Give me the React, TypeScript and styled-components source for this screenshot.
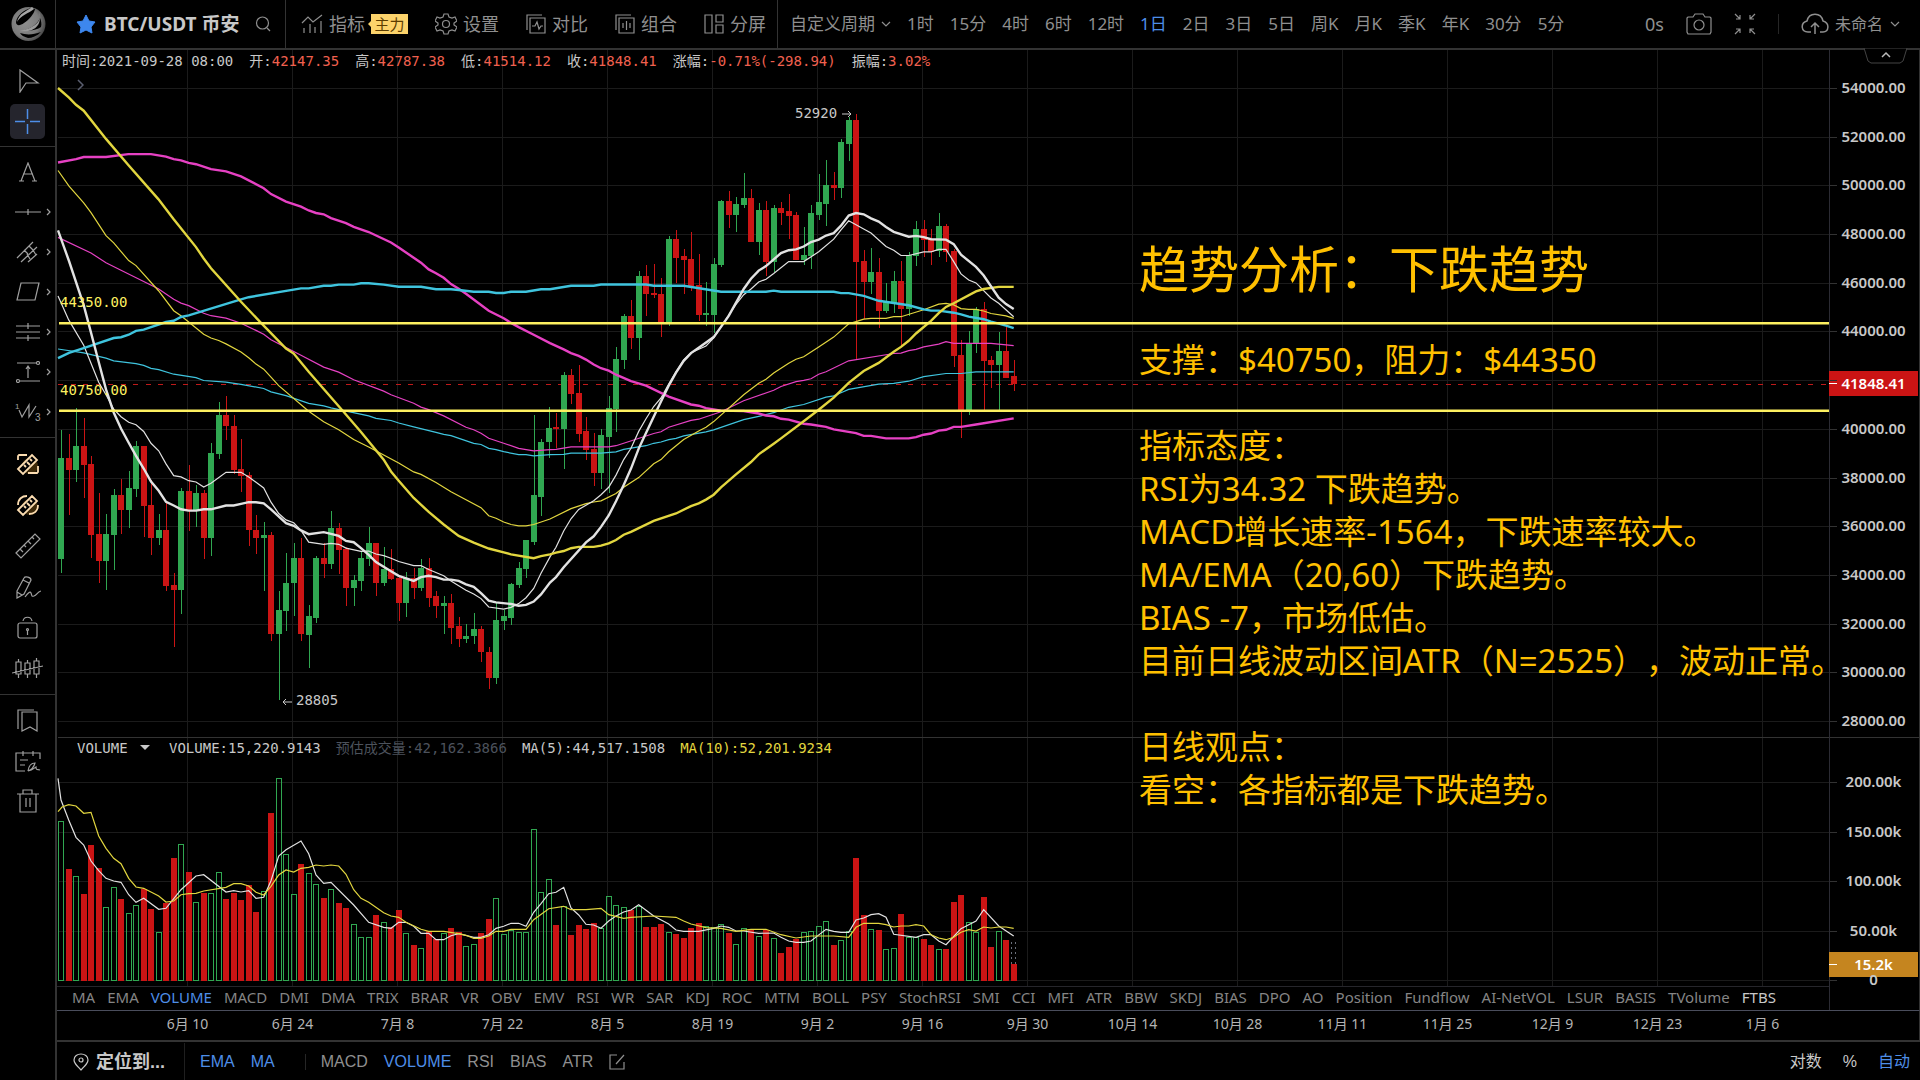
import React from "react";
import styled, { createGlobalStyle, css } from "styled-components";

const sans = `"Noto Sans", "Noto Sans CJK SC", sans-serif`;
const mono = `"DejaVu Sans Mono", "Noto Sans CJK SC", monospace`;

const c = {
  line: "#333333",
  grid: "#1b1b1b",
  text: "#8f8f8f",
  bright: "#c8c8c8",
  blue: "#4e8ee8",
  up: "#30a751",
  down: "#cb1414",
  yellow: "#e2d63f",
  level: "#fdf060",
  magenta: "#e641c3",
  cyan: "#3fc4de",
  white: "#e2e2e2",
};

const GlobalStyle = createGlobalStyle`
  * { box-sizing: border-box; }
  body { margin: 0; background: #000; color: ${c.text}; font-family: ${sans}; }
  button, select, input { font: inherit; color: inherit; background: none; border: 0; padding: 0; margin: 0; cursor: pointer; white-space: nowrap; }
  select { appearance: none; }
  option { background: #111; }
  svg { display: block; flex: none; }
`;

/* ---------- market data ---------- */

type Segment = { x0: number; y0: number; kx: number; ky: number };
type Point = [number, number];

const PRICE_A: Segment = { x0: 50, y0: 80, kx: 3, ky: 1568 / 660 };
const PRICE_B: Segment = { x0: 540, y0: 80, kx: 3, ky: 2.45 };
const VOL_A: Segment = { x0: 50, y0: 725, kx: 3, ky: 3 };
const VOL_B: Segment = { x0: 540, y0: 725, kx: 3, ky: 3 };

const SPLIT = 65;
const STEP = 7.5;
const FIRST_X = 61;

// direction, body top, body bottom, high, low
const CANDLES_A = `G898,1137,832,1172 R898,926,840,1034 G870,926,779,954 R870,914,803,993 R912,1080,893,1135 R1079,1143,981,1195 G1079,1143,1031,1211 G986,1080,972,1165 R986,1021,949,1078 G969,1021,930,1064 G870,971,858,991 R870,1011,870,1085 R1010,1089,950,1128 G1069,1089,1031,1105 R1069,1203,1005,1215 R1200,1211,1171,1347 G977,1211,970,1268 R977,1021,915,1071 G981,1021,962,1061 R981,1087,975,1139 G886,1087,863,1131 G796,888,766,900 R796,822,751,855 R821,926,797,936 R924,941,853,979 R938,1070,932,1108 R1069,1089,1033,1127 G1081,1089,1051,1213 R1081,1315,1075,1333 G1259,1315,1215,1474 G1195,1262,1124,1308 G1136,1196,1101,1273 R1136,1315,1089,1332 G1274,1319,1248,1397 G1136,1277,1132,1291 R1136,1149,1101,1182 G1064,1149,1024,1161 R1064,1117,1053,1173 R1115,1206,1110,1249 G1188,1206,1176,1250 G1136,1191,1120,1213 G1100,1137,1061,1155 R1100,1194,1100,1225 G1162,1194,1109,1201 R1162,1185,1114,1187 R1184,1242,1178,1285 G1184,1242,1169,1275 R1184,1206,1160,1232 G1159,1206,1137,1214 R1159,1230,1136,1251 R1227,1250,1214,1277 G1243,1250,1226,1315 R1243,1301,1221,1340 R1298,1327,1276,1346 G1320,1327,1292,1338 G1304,1322,1266,1341 R1304,1360,1296,1383 R1358,1420,1346,1448 G1284,1420,1242,1436 G1274,1286,1258,1306 G1197,1277,1195,1294 G1159,1200,1146,1208 G1093,1161,1093,1183 G986,1097,796,1105 G859,990,854,1036`;
const CANDLES_B = `G853,888,800,926 R849,855,816,902 G723,855,715,954 R723,769,708,794 R767,867,698,887 R861,906,825,931 R905,963,866,995 G870,963,856,1002 G804,874,773,1012 G684,806,653,862 G578,686,574,708 R578,631,538,659 G480,631,469,687 R480,524,454,579 R521,527,452,533 R524,597,484,629 G390,597,383,602 R390,435,367,497 R431,441,414,524 R439,505,373,516 R502,575,426,591 G570,576,496,602 G451,576,435,620 G296,453,294,458 R296,331,272,363 G304,331,287,372 G288,306,227,314 R288,398,266,398 G318,398,301,429 R318,447,296,479 G313,447,307,471 R313,325,299,355 R321,333,279,390 R331,441,324,441 G429,441,361,453 G327,431,307,464 G300,331,230,342 G257,304,197,357 R257,264,225,294 G153,264,144,289 G97,157,90,198 R97,446,83,685 R444,496,416,586 G471,496,412,524 R471,566,435,607 G543,567,497,571 G493,546,469,571 R493,560,444,651 G429,560,422,577 G366,431,346,455 R366,393,344,434 R390,421,366,453 G358,418,326,434 R358,422,354,445 R420,675,414,703 R674,808,637,877 G646,808,615,820 G562,646,557,670 R562,688,543,808 R686,698,677,755 G664,698,618,808 R664,729,606,729 R726,746,687,762`;

const VOLUMES = [
  287, 432, 452, 507, 360, 430, 547, 487, 522, 565, 539, 491, 552, 622, 535, 399, 358, 440, 532, 503, 505, 441, 522, 503, 525, 480, 560, 497, 264, 160, 388, 508,
  417, 445, 478, 519, 493, 534, 549, 598, 637, 637, 570, 592, 607, 555, 625, 660, 670, 619, 642, 625, 609, 622, 663, 658, 624, 582, 520, 628, 614, 622, 622, 313,
  502, 463, 601, 544, 631, 601, 612, 594, 610, 512, 539, 547, 556, 543, 606, 606, 597, 622, 627, 639, 609, 594, 602, 605, 596, 624, 656, 610, 613, 632, 615, 640,
  684, 666, 642, 622, 618, 602, 587, 660, 644, 618, 399, 570, 613, 616, 673, 670, 567, 635, 637, 642, 660, 673, 672, 531, 511, 592, 622, 516, 666, 618, 646, 717,
];

const LINES = [
  {
    color: c.cyan, width: 1.2,
    a: "24,639;101,648;168,661;191,667;258,674;281,678;303,685;326,688;371,699;438,707;461,714;528,718;573,723;641,733;663,741;708,750;776,768;821,774;843,779;956,798;978,804;1023,809;1046,815;1091,824;1158,837;1181,842;1203,845;1271,863;1293,866;1316,875;1338,878;1361,883;1406,890;1428,890;1451,893;1500,890",
    b: "71,917;93,914;183,914;228,911;251,905;273,902;318,896;341,890;363,887;386,881;408,878;431,872;498,862;521,857;611,832;656,824;701,815;746,802;791,795;858,777;881,774;903,766;926,758;1016,745;1061,743;1106,738;1151,727;1218,719;1263,719;1308,715;1421,715",
  },
  {
    color: c.magenta, width: 1.2,
    a: "24,374;123,411;168,434;213,452;325,496;371,521;393,530;416,536;461,554;483,560;528,566;573,578;618,595;641,604;663,617;753,654;821,682;866,694;911,712;1001,739;1023,748;1091,768;1113,777;1136,783;1181,798;1248,825;1271,831;1293,839;1316,851;1361,863;1406,875;1451,881;1500,878",
    b: "48,905;93,899;206,899;228,896;341,866;363,862;386,851;453,834;476,831;543,813;611,786;701,760;723,751;768,739;791,736;813,732;836,721;858,715;926,688;1061,670;1083,669;1106,663;1128,660;1151,654;1196,647;1218,641;1241,645;1353,645;1421,651",
  },
  {
    color: c.yellow, width: 1.2,
    a: "24,215;57,252;101,292;123,315;168,370;191,387;236,429;258,441;325,500;371,548;393,560;461,604;483,613;506,619;528,627;573,646;596,660;618,675;641,687;663,706;686,726;776,787;821,812;866,831;911,854;956,872;1046,910;1091,931;1113,937;1158,956;1203,978;1293,1016;1316,1035;1338,1041;1361,1050;1383,1056;1406,1059;1428,1059;1451,1056;1500,1043",
    b: "93,1050;138,1038;161,1034;183,1031;228,1013;251,998;296,974;341,940;363,930;386,911;431,881;476,860;498,851;521,837;611,771;656,743;678,733;701,718;746,694;768,684;791,678;836,654;881,630;926,597;948,592;971,586;993,584;1038,584;1061,580;1083,580;1151,563;1196,549;1218,547;1241,551;1263,560;1286,562;1308,562;1331,566;1353,572;1398,578;1421,584",
  },
  {
    color: c.white, width: 1.2,
    a: "24,513;56,570;101,630;123,673;146,718;168,748;191,782;213,800;236,813;258,819;281,835;303,863;326,881;348,912;371,940;393,943;416,952;438,955;461,967;483,958;528,932;573,932;596,943;641,969;663,1003;686,1030;708,1045;731,1052;753,1070;776,1098;821,1103;843,1101;866,1103;888,1112;933,1120;956,1119;978,1126;1001,1130;1023,1136;1046,1144;1091,1154;1113,1154;1136,1163;1181,1178;1203,1190;1248,1212;1271,1221;1293,1232;1316,1252;1361,1257;1383,1253;1406,1244;1428,1230;1451,1208;1473,1172;1500,1133",
    b: "48,1145;71,1105;93,1075;116,1052;161,1031;183,1016;206,998;228,968;251,930;273,902;296,861;318,830;341,800;363,779;386,745;408,715;431,686;453,668;498,652;521,632;566,576;588,550;611,526;633,512;656,495;678,488;701,474;746,445;791,445;836,421;881,390;903,367;926,345;971,365;993,375;1038,408;1061,417;1083,430;1106,430;1151,421;1173,421;1196,415;1218,415;1241,445;1263,475;1286,490;1308,497;1353,534;1376,547;1421,580",
  },
  {
    color: c.magenta, width: 2.4,
    a: "24,196;78,188;101,183;168,183;235,176;303,176;348,182;371,188;393,191;416,197;438,200;483,212;528,217;573,229;641,257;663,271;708,289;753,301;776,310;798,316;821,319;843,328;888,340;911,349;956,361;1023,386;1046,398;1113,434;1136,450;1158,459;1181,470;1203,485;1226,496;1248,508;1316,548;1361,566;1383,577;1406,587;1451,605;1500,625",
    b: "71,660;93,669;116,676;138,685;161,697;183,706;206,712;228,722;273,738;318,749;386,776;453,795;476,798;498,804;543,810;611,811;656,817;678,822;701,824;723,830;746,832;791,842;813,844;858,850;881,856;948,865;971,872;993,872;1038,878;1106,878;1128,875;1151,869;1173,866;1196,859;1218,857;1241,850;1263,850;1308,844;1421,829",
  },
  {
    color: c.cyan, width: 2.4,
    a: "24,661;57,648;101,637;191,613;213,611;236,605;258,596;281,593;348,575;371,572;393,563;416,559;573,521;596,516;753,495;776,495;821,489;843,489;866,486;911,486;933,483;956,483;1001,486;1046,491;1113,491;1158,497;1203,497;1226,499;1271,503;1316,503;1338,506;1361,506;1383,503;1428,503;1473,497;1500,497",
    b: "93,504;161,504;183,501;318,501;341,504;431,504;543,519;678,519;701,516;723,519;881,519;903,522;926,522;971,529;1016,541;1106,552;1151,562;1173,565;1196,565;1241,570;1263,574;1286,580;1331,586;1353,592;1376,597;1398,602;1421,608",
  },
  {
    color: c.yellow, width: 2.4,
    a: "24,19;57,42;78,59;101,73;168,140;235,202;325,283;371,331;438,397;461,424;483,447;573,527;633,577;708,638;731,650;776,693;821,734;878,786;933,836;1001,902;1023,930;1046,952;1091,993;1136,1026;1181,1056;1226,1083;1271,1099;1316,1113;1361,1122;1383,1127;1451,1136;1473,1131;1500,1127",
    b: "48,1158;71,1154;93,1147;116,1144;161,1144;183,1141;206,1135;228,1127;251,1114;273,1107;341,1080;408,1062;453,1044;476,1037;498,1028;521,1016;543,998;588,966;633,936;656,917;701,891;723,878;791,836;836,808;881,778;926,742;971,713;1016,693;1061,666;1083,654;1106,639;1128,621;1173,590;1196,571;1218,556;1241,547;1308,518;1331,512;1376,507;1421,507",
  },
  {
    color: c.white, width: 2.4,
    a: "24,357;57,430;101,535;123,600;146,670;168,735;191,790;213,828;236,862;258,893;281,923;303,954;326,976;348,1002;371,1011;393,1020;416,1023;438,1023;461,1020;483,1020;528,1011;551,1011;573,1007;596,1003;618,1003;641,1006;663,1020;708,1053;731,1059;753,1070;776,1079;821,1074;843,1078;866,1083;888,1095;911,1098;933,1112;956,1128;978,1145;1023,1167;1046,1178;1091,1190;1113,1181;1136,1178;1158,1181;1181,1187;1203,1187;1226,1190;1248,1198;1271,1204;1293,1219;1316,1237;1338,1241;1383,1245;1406,1249;1428,1247;1451,1239;1473,1222;1500,1194",
    b: "48,1218;71,1194;138,1133;161,1118;183,1095;206,1067;228,1032;251,992;273,952;296,903;318,865;341,825;363,788;386,749;408,717;431,688;453,669;476,656;521,630;543,605;566,578;611,512;633,487;656,467;678,456;723,424;746,417;768,415;791,408;813,397;836,391;858,381;881,375;903,357;926,332;948,326;971,329;993,339;1016,347;1038,360;1061,372;1106,384;1128,382;1151,385;1173,390;1218,391;1241,402;1263,428;1308,458;1331,479;1376,533;1398,549;1421,561",
  },
];

const VOLUME_LINES = [
  {
    color: c.white, width: 1.2,
    a: "24,160;33,225;56,285;78,337;101,360;123,408;146,437;168,460;191,468;213,472;236,509;258,532;281,520;326,553;348,550;393,494;438,453;461,449;528,501;551,497;573,501;596,497;618,520;641,517;663,467;686,393;708,374;753,348;776,386;798,450;821,475;843,472;911,540;956,592;1001,607;1023,610;1046,592;1068,592;1091,604;1113,625;1136,625;1158,644;1181,644;1203,632;1226,626;1271,637;1293,637;1316,629;1338,610;1361,604;1383,595;1406,595;1428,604;1451,562;1473,536;1496,506",
    b: "48,502;71,487;93,549;116,570;138,598;161,600;183,610;206,588;228,573;251,561;273,555;296,539;341,573;386,597;408,615;431,619;476,619;521,610;543,603;566,607;588,618;611,618;656,625;701,624;723,637;746,648;768,652;791,652;813,648;858,613;881,619;903,622;926,622;948,585;971,579;993,569;1016,566;1038,577;1061,628;1128,637;1151,629;1173,629;1196,648;1218,659;1263,611;1308,588;1331,554;1376,603;1421,633",
  },
  {
    color: c.yellow, width: 1.2,
    a: "24,260;36,246;56,239;78,243;101,265;123,262;146,333;168,370;191,400;213,416;236,460;258,486;281,490;326,513;348,531;371,528;393,509;416,506;438,505;461,498;528,487;551,476;573,476;596,483;618,502;641,510;663,484;686,450;708,435;731,441;753,430;776,427;798,420;821,423;843,420;866,423;888,448;911,494;933,520;956,532;1001,563;1023,573;1046,577;1068,592;1113,613;1136,619;1181,619;1226,626;1248,631;1271,640;1293,640;1316,633;1338,619;1361,619;1383,613;1428,613;1451,584;1496,551",
    b: "71,544;93,554;138,554;183,550;206,569;251,580;273,577;341,573;408,577;431,588;453,597;498,608;543,610;588,619;633,613;678,613;723,629;768,639;813,633;881,633;926,637;948,607;971,595;1016,595;1038,599;1061,606;1083,603;1106,603;1128,599;1151,603;1173,629;1196,639;1218,644;1241,637;1263,622;1286,614;1308,618;1331,606;1353,609;1376,606;1398,606;1421,610",
  },
];

const parse = (s: string): Point[] => s.split(";").map((p) => p.split(",").map(Number) as Point);
const project = (pts: Point[], s: Segment) => pts.map(([x, y]) => `${(s.x0 + x / s.kx).toFixed(1)},${(s.y0 + y / s.ky).toFixed(1)}`);
const trace = (a: string, b: string, sa: Segment, sb: Segment) => [...project(parse(a), sa), ...project(parse(b), sb)].join(" ");

const candles = [
  ...CANDLES_A.split(" ").map((row) => ({ row, seg: PRICE_A })),
  ...CANDLES_B.split(" ").map((row) => ({ row, seg: PRICE_B })),
].map(({ row, seg }, i) => {
  const [top, bottom, high, low] = row.slice(1).split(",").map((v) => seg.y0 + Number(v) / seg.ky);
  const up = row[0] === "G";
  return { x: FIRST_X + i * STEP, up, top, bottom, high, low, vol: (i < SPLIT ? VOL_A : VOL_B).y0 + VOLUMES[i] / 3 };
});

const PRICE_LABELS = ["54000.00", "52000.00", "50000.00", "48000.00", "46000.00", "44000.00", "", "40000.00", "38000.00", "36000.00", "34000.00", "32000.00", "30000.00", "28000.00"];
const VOLUME_LABELS = ["200.00k", "150.00k", "100.00k", "50.00k", "0"];
const DATES = ["6月 10", "6月 24", "7月 8", "7月 22", "8月 5", "8月 19", "9月 2", "9月 16", "9月 30", "10月 14", "10月 28", "11月 11", "11月 25", "12月 9", "12月 23", "1月 6"];
const PERIODS = ["1时", "15分", "4时", "6时", "12时", "1日", "2日", "3日", "5日", "周K", "月K", "季K", "年K", "30分", "5分"];
const INDICATORS = ["MA", "EMA", "VOLUME", "MACD", "DMI", "DMA", "TRIX", "BRAR", "VR", "OBV", "EMV", "RSI", "WR", "SAR", "KDJ", "ROC", "MTM", "BOLL", "PSY", "StochRSI", "SMI", "CCI", "MFI", "ATR", "BBW", "SKDJ", "BIAS", "DPO", "AO", "Position", "Fundflow", "AI-NetVOL", "LSUR", "BASIS", "TVolume", "FTBS"];

/* ---------- layout ---------- */

const Page = styled.div`
  display: flex;
  flex-direction: column;
  min-height: 100vh;
  background: #000;
`;

const Header = styled.header`
  display: flex;
  height: 50px;
  border-bottom: 2px solid ${c.line};
  font-size: 18px;
  line-height: 24px;
`;

const LogoBox = styled.a`
  display: flex;
  align-items: center;
  width: 56px;
  padding-left: 11px;
  border-right: 1px solid ${c.line};
`;

const Symbol = styled.div`
  display: flex;
  align-items: center;
  gap: 8px;
  width: 230px;
  padding: 0 0 1px 20px;
  border-right: 1px solid ${c.line};
`;

const Pair = styled.h1`
  flex: 1;
  margin: 0;
  font-size: 19px;
  font-weight: 700;
  color: ${c.bright};
  white-space: nowrap;
`;

const SearchButton = styled.button`
  padding-right: 14px;
`;

const ToolGroup = styled.nav`
  display: flex;
  align-items: center;
  gap: 27px;
  padding: 0 11px 1px 15px;
  border-right: 1px solid ${c.line};
`;

const Tool = styled.button`
  display: flex;
  align-items: center;
  gap: 6px;
`;

const Tag = styled.span`
  position: relative;
  width: 37px;
  height: 20px;
  background: #fcd36b;
  color: #5c3d00;
  font-size: 15px;
  line-height: 20px;
  text-align: center;
  &::before {
    content: "";
    position: absolute;
    left: -3px;
    top: 7px;
    border: 3px solid transparent;
    border-left: 0;
    border-right-color: #fcd36b;
  }
`;

const Periods = styled.nav`
  display: flex;
  align-items: center;
  gap: 16px;
  padding: 0 0 1px 12px;
  font-size: 17px;
`;

const Picker = styled.label<{ $size?: number }>`
  display: flex;
  align-items: center;
  gap: 6px;
  ${(p) => p.$size && css`font-size: ${p.$size}px;`}
`;

const Period = styled.button<{ $active?: boolean }>`
  color: ${(p) => (p.$active ? c.blue : c.text)};
`;

const HeaderEnd = styled.div`
  display: flex;
  align-items: center;
  gap: 22px;
  margin-left: auto;
  padding: 0 20px 1px 0;
`;

const Rule = styled.span<{ $h?: number }>`
  width: 1px;
  height: ${(p) => p.$h ?? 20}px;
  background: #262626;
`;

const Body = styled.div`
  display: flex;
  flex: 1;
`;

const Sidebar = styled.aside`
  width: 57px;
  flex: none;
  border-right: 2px solid ${c.line};
`;

const SideGroup = styled.div<{ $top: number; $last?: boolean }>`
  padding: ${(p) => p.$top}px 0 5px;
  ${(p) => !p.$last && css`border-bottom: 1px solid ${c.line};`}
`;

const SideTool = styled.button<{ $tall?: boolean }>`
  position: relative;
  display: flex;
  align-items: center;
  justify-content: center;
  width: 55px;
  height: ${(p) => (p.$tall ? 41 : 40)}px;
  color: #a0a0a0;
`;

const SideIcon = styled.span<{ $active?: boolean }>`
  display: flex;
  align-items: center;
  justify-content: center;
  width: 35px;
  height: 35px;
  border-radius: 5px;
  ${(p) => p.$active && css`background: #25252d; color: ${c.blue};`}
`;

const Caret = styled.span`
  position: absolute;
  right: 4px;
`;

const Main = styled.main`
  display: flex;
  flex: 1;
  flex-direction: column;
  min-width: 0;
`;

const ChartRow = styled.section`
  position: relative;
  display: flex;
`;

const PlotColumn = styled.div`
  position: relative;
  flex: 1;
  min-width: 0;
`;

const Plot = styled.svg`
  width: 100%;
  height: 936px;
`;

const Legend = styled.div<{ $top: number; $left: number; $gap: number }>`
  position: absolute;
  top: ${(p) => p.$top}px;
  left: ${(p) => p.$left}px;
  display: flex;
  align-items: center;
  gap: ${(p) => p.$gap}px;
  color: ${c.bright};
  font-family: ${mono};
  font-size: 14px;
  line-height: 20px;
  white-space: nowrap;
`;

const Red = styled.span`
  color: #f0604f;
`;

const Tinted = styled.span<{ $color: string }>`
  color: ${(p) => p.$color};
`;

const Expander = styled.button`
  position: absolute;
  left: 19px;
  top: 28px;
  color: #5b5f70;
`;

const CollapseTab = styled.button`
  position: absolute;
  right: 12px;
  top: -2px;
  z-index: 2;
`;

const Tabs = styled.div`
  display: flex;
  gap: 12px;
  height: 24px;
  padding-left: 15px;
  overflow: hidden;
  border-top: 1px solid #26262b;
  font-size: 15px;
  line-height: 20px;
`;

const Tab = styled.button<{ $tone?: string }>`
  height: 20px;
  color: ${(p) => p.$tone ?? "#858585"};
`;

const Axis = styled.div`
  width: 91px;
  flex: none;
  border-left: 1px solid #2b2b33;
  border-right: 1px solid ${c.line};
  color: ${c.bright};
  font-size: 15px;
  font-weight: 600;
  line-height: 20px;
  text-align: center;
`;

const Scale = styled.div<{ $kind: "price" | "volume" }>`
  position: relative;
  display: flex;
  flex-direction: column;
  justify-content: space-between;
  height: ${(p) => (p.$kind === "price" ? 688 : 272)}px;
  padding: ${(p) => (p.$kind === "price" ? "27px 2px 7px 0" : "33px 2px 21px 0")};
  ${(p) => p.$kind === "price" && css`border-bottom: 1px solid ${c.line};`}
`;

const Mark = styled.span`
  position: relative;
  z-index: 1;
  height: 20px;
  &::before {
    content: "";
    position: absolute;
    left: 0;
    top: 11px;
    width: 7px;
    height: 1px;
    background: ${c.line};
  }
`;

const Flag = styled.span<{ $top: number; $color: string }>`
  position: absolute;
  left: -1px;
  right: 1px;
  top: ${(p) => p.$top}px;
  height: 25px;
  background: ${(p) => p.$color};
  color: #fff;
  line-height: 25px;
  &::before {
    content: "";
    position: absolute;
    left: 0;
    top: 12px;
    width: 8px;
    height: 1px;
    background: #fff;
  }
`;

const Notes = styled.div`
  position: absolute;
  left: 1082px;
  top: 189px;
  z-index: 3;
  color: #ffc000;
  font-size: 33px;
  line-height: 43px;
  text-spacing-trim: space-all;
  white-space: nowrap;
  p { margin: 0; min-height: 43px; }
`;

const NotesTitle = styled.h2`
  margin: 0 0 39px;
  font-size: 50px;
  font-weight: 400;
  line-height: 60px;
`;

const TimeAxis = styled.div`
  display: flex;
  height: 30px;
  padding-left: 78px;
  overflow: hidden;
  border-top: 1px solid #4a4d5c;
  border-right: 1px solid ${c.line};
  color: #b4b4b4;
  font-size: 14px;
  line-height: 26px;
`;

const DateCell = styled.span`
  width: 105px;
  flex: none;
  text-align: center;
`;

const Footer = styled.footer`
  display: flex;
  flex: 1;
  align-items: center;
  min-height: 40px;
  padding-top: 1px;
  border-top: 2px solid ${c.line};
  font-family: "Liberation Sans", "Noto Sans CJK SC", sans-serif;
  font-size: 16px;
  line-height: 24px;
`;

const Locate = styled.button`
  display: flex;
  align-items: center;
  gap: 7px;
  width: 128px;
  height: 37px;
  padding-left: 16px;
  border-right: 1px solid #1f1f1f;
  color: ${c.bright};
  font-size: 18px;
  font-weight: 700;
`;

const FooterGroup = styled.div<{ $end?: boolean }>`
  display: flex;
  align-items: center;
  gap: 16px;
  padding-left: 15px;
  ${(p) => p.$end && css`margin-left: auto; padding-right: 10px; gap: 21px; color: ${c.bright};`}
`;

const FooterRule = styled(Rule)`
  margin-left: 30px;
`;

const FooterButton = styled.button<{ $active?: boolean }>`
  ${(p) => p.$active && css`color: ${c.blue};`}
`;

/* ---------- icons ---------- */

const Icon = ({ w = 24, h = w, sw = 1.2, children }: { w?: number; h?: number; sw?: number; children: React.ReactNode }) => (
  <svg width={w} height={h} viewBox={`0 0 ${w} ${h}`} fill="none" stroke="currentColor" strokeWidth={sw} aria-hidden="true">
    {children}
  </svg>
);

const Chevron = () => (
  <Icon w={10} h={8}><path d="M1 2l4 4 4-4" /></Icon>
);

const Logo = () => (
  <svg width="35" height="36" viewBox="0 0 35 36" aria-hidden="true">
    <defs>
      <radialGradient id="ball" cx="0.4" cy="0.45" r="0.6">
        <stop offset="0" stopColor="#8f8f8f" />
        <stop offset="0.7" stopColor="#7b7b7b" />
        <stop offset="1" stopColor="#4a4a4a" />
      </radialGradient>
    </defs>
    <circle cx="17.500" cy="18" r="17" fill="url(#ball)" />
    <path d="M20 2C12 4 6 10 5 16c0 4 4 4 8 1C18 14 23 8 24 3z" fill="#000" />
    <path d="M21 1c-5 4-13 6-15 15 3-6 12-9 17-13z" fill="#a5a5a5" />
    <path d="M29 12c-2 5-8 10-15 12 5 1 12 0 16-3 1-3 0-7-1-9z" fill="#000" />
    <path d="M9 27c6 2 13 2 21-1-4 4-9 6-13 6-4-1-7-3-8-5z" fill="#000" />
    <path d="M28 5c4 9-3 17-20 20 16 2 24-6 20-20z" fill="#9a9a9a" />
  </svg>
);

const goldTool = (curved: boolean) => (
  <svg width="26" height="26" viewBox="0 0 26 26" fill="none" stroke="#fbdcb0" strokeWidth="1.8" aria-hidden="true">
    <circle cx="15" cy="15" r="8" fill="#3d2908" stroke="none" />
    <path d="M3 18L17 4l5 5L8 23zM9 14l2 2M12 11l3 3M15 8l2 2" fill="#000" />
    {curved ? <path d="M3 13c0-6 4-9 9-9M23 13c0 6-4 9-9 9" /> : <path d="M3 9V5l1-1h8M23 15v6l-1 1h-9" />}
  </svg>
);

const sideIcons = {
  cursor: <Icon w={24}><path d="M4 1v22l6-9 12 0z" /></Icon>,
  cross: <Icon w={25} sw={1.5}><path d="M12.500 0v10M12.500 15v10M0 12.500h10M15 12.500h10" /></Icon>,
  text: <Icon w={20}><path d="M3 19L10 1l7 18M5 12h10M1 19h5M14 19h5" /></Icon>,
  line: <Icon w={26} h={8}><path d="M0 4h26M13 1v6" /></Icon>,
  pitch: <Icon w={24}><path d="M1 18L17 2M5 22L21 7M12 22l9-8M8 10l4 4M13 6l4 4M17 10l3 5M11 14l3 5" /></Icon>,
  shape: <Icon w={24} h={20}><path d="M5 1h18l-4 17H1z" /></Icon>,
  fib: <Icon w={24} h={18}><path d="M0 3h24M0 9h24M0 15h24M12 0v6M12 12v6" /></Icon>,
  measure: <Icon w={24} h={22}><path d="M1 2h20M4 20h20M12 17V6M10 8l2-3 2 3" /><circle cx="22" cy="2" r="1.500" /><circle cx="2" cy="20" r="1.500" /></Icon>,
  wave: (
    <svg width="26" height="20" viewBox="0 0 26 20" fill="none" stroke="currentColor" strokeWidth="1.2" aria-hidden="true">
      <path d="M4 8l3 7L14 3l0 12 7-11" />
      <text x="0" y="7" fontSize="8" fill="currentColor" stroke="none" fontFamily="Liberation Sans">1</text>
      <text x="20" y="19" fontSize="10" fill="currentColor" stroke="none" fontFamily="Liberation Sans">3</text>
    </svg>
  ),
  ruler: <Icon w={26}><path d="M1 20L20 1l5 5L6 25zM5 16l3 3M9 12l2 2M13 8l3 3M17 4l2 2" /></Icon>,
  pencil: <Icon w={26} h={24}><path d="M2 16L9 3c1-2 7-1 7 2L9 19l-7 4zM8 5l6 3M2 17l5 3M10 22c3-4 5-6 6-4s0 4 3 3 3-4 7-5" /></Icon>,
  lock: <Icon w={22} h={24}><rect x="1" y="7" width="19" height="15" rx="2" /><path d="M6 5c1-5 8-5 9 0M10.500 14v5" /><circle cx="10.500" cy="13.500" r="1" /></Icon>,
  bars: <Icon w={32} h={22}><path d="M4 4h5v12H4zM13 5h5v11h-5zM22 3h5v13h-5zM6.500 1v3M6.500 16v4M15.500 2v3M15.500 16v4M24.500 0v3M24.500 16v4M0 15l31-7" /></Icon>,
  bookmark: <Icon w={22} h={24}><path d="M5 3h15v19l-7-4-8 4zM1 20V1h16" /></Icon>,
  note: <Icon w={26} h={22}><path d="M10 21H1V3h24v6M8 1v5M18 1v5M5 10h8M5 15h5M13 21c1-7 5-8 7-8-1 4-4 7-7 8 5-1 6-3 8-4 0 4 2 2 4 3" /></Icon>,
  trash: <Icon w={22} h={24}><path d="M0 5h22M3 5v18h16V5M6 5V1h9v4M9 9v9M13 9v9" /></Icon>,
};

type SideItem = { name: string; icon: React.ReactNode; more?: boolean; active?: boolean };
const SIDE: { top: number; tall?: boolean; items: SideItem[] }[] = [
  { top: 11, items: [{ name: "光标", icon: sideIcons.cursor }, { name: "十字线", icon: sideIcons.cross, active: true }] },
  {
    top: 5,
    items: [
      { name: "文字", icon: sideIcons.text },
      { name: "线段", icon: sideIcons.line, more: true },
      { name: "通道", icon: sideIcons.pitch, more: true },
      { name: "形状", icon: sideIcons.shape, more: true },
      { name: "斐波那契", icon: sideIcons.fib, more: true },
      { name: "测量", icon: sideIcons.measure, more: true },
      { name: "波浪", icon: sideIcons.wave, more: true },
    ],
  },
  {
    top: 5, tall: true,
    items: [
      { name: "智能画线", icon: goldTool(false) },
      { name: "智能测量", icon: goldTool(true) },
      { name: "尺子", icon: sideIcons.ruler },
      { name: "画笔", icon: sideIcons.pencil },
      { name: "锁定", icon: sideIcons.lock },
      { name: "K线", icon: sideIcons.bars },
    ],
  },
  { top: 6, items: [{ name: "书签", icon: sideIcons.bookmark }, { name: "笔记", icon: sideIcons.note }, { name: "删除", icon: sideIcons.trash }] },
];

/* ---------- chart ---------- */

const crisp = (v: number) => Math.round(v) + 0.5;

const Chart = () => (
  <Plot role="img" aria-label="BTC/USDT 日线">
    <g transform="translate(-57 -50)">
      <g stroke={c.grid} shapeRendering="crispEdges">
        {PRICE_LABELS.map((_, i) => <line key={i} x1="58" x2="110%" y1={crisp(88 + (i * 633) / 13)} y2={crisp(88 + (i * 633) / 13)} />)}
        {VOLUME_LABELS.map((_, i) => <line key={i} x1="58" x2="110%" y1={crisp(782 + i * 49.5)} y2={crisp(782 + i * 49.5)} />)}
        {DATES.map((d, i) => <line key={d} x1={187.5 + i * 105} x2={187.5 + i * 105} y1="50" y2="986" />)}
      </g>
      <line x1="58" x2="110%" y1="737.500" y2="737.500" stroke={c.line} />
      <line x1="58" x2="110%" y1="384.500" y2="384.500" stroke="#c01a1a" strokeDasharray="5 7.5" shapeRendering="crispEdges" />
      <g shapeRendering="crispEdges">
        {candles.map((k, i) => {
          const left = Math.round(k.x - 3);
          const color = k.up ? c.up : c.down;
          return (
            <g key={i} fill={color}>
              <rect x={left + 2.5} y={k.high} width="1" height={k.low - k.high} />
              <rect x={left} y={k.top} width="6" height={Math.max(1, k.bottom - k.top)} />
              {k.up ? (
                <rect x={left + 0.5} y={Math.round(k.vol) + 0.5} width="5" height={980 - Math.round(k.vol)} fill="none" stroke={color} />
              ) : (
                <rect x={left} y={k.vol} width="6" height={980.5 - k.vol} />
              )}
            </g>
          );
        })}
      </g>
      <path d="M1011.500 964V939M1015.500 964V939" stroke="#6a6f7a" strokeDasharray="2 3" />
      {LINES.map((l, i) => <polyline key={i} points={trace(l.a, l.b, PRICE_A, PRICE_B)} fill="none" stroke={l.color} strokeWidth={l.width} />)}
      {VOLUME_LINES.map((l, i) => <polyline key={i} points={trace(l.a, l.b, VOL_A, VOL_B)} fill="none" stroke={l.color} strokeWidth={l.width} />)}
      <path d="M59 323.250H4000M59 410.750H4000" stroke={c.level} strokeWidth="2.500" />
      <g fontFamily="DejaVu Sans Mono" fontSize="14" fill={c.level}>
        <text x="60" y="307">44350.00</text>
        <text x="60" y="395">40750.00</text>
      </g>
      <g fontFamily="DejaVu Sans Mono" fontSize="14" fill={c.bright}>
        <text x="795" y="118">52920</text>
        <text x="296" y="705">28805</text>
      </g>
      <path d="M842 114h9M848 111l3 3-3 3M292 702h-9M286 699l-3 3 3 3" stroke={c.bright} fill="none" />
    </g>
  </Plot>
);

const QUOTE: [string, string][] = [
  ["开", "42147.35"],
  ["高", "42787.38"],
  ["低", "41514.12"],
  ["收", "41848.41"],
  ["涨幅", "-0.71%(-298.94)"],
  ["振幅", "3.02%"],
];

export default function App() {
  return (
    <Page>
      <GlobalStyle />
      <Header>
        <LogoBox href="#" aria-label="首页"><Logo /></LogoBox>
        <Symbol>
          <svg width="20" height="20" viewBox="0 0 20 20" fill="#3d87ee" aria-hidden="true">
            <path d="M10 1l3 6 6 1-4 5 1 6-6-3-6 3 1-6-4-5 6-1z" stroke="#3d87ee" strokeLinejoin="round" />
          </svg>
          <Pair>BTC/USDT 币安</Pair>
          <SearchButton aria-label="搜索"><Icon w={16}><circle cx="7.500" cy="7" r="6" /><path d="M12 12l3 3" /></Icon></SearchButton>
        </Symbol>
        <ToolGroup>
          <Tool>
            <Icon w={22} h={20}><path d="M1 9l6-6 5 5 9-7M3 19v-5M9 19V10M14 19v-6M20 19V7" /></Icon>指标<Tag>主力</Tag>
          </Tool>
          <Tool>
            <Icon w={22}><path d="M9 1h4l1 3 3 1 3-1 2 4-3 2v2l3 2-2 4-3-1-3 1-1 3H9l-1-3-3-1-3 1-2-4 3-2v-2L0 8l2-4 3 1 3-1z" /><circle cx="11" cy="11" r="3.500" /></Icon>设置
          </Tool>
          <Tool>
            <Icon w={20}><path d="M4 4h15v15H4zM1 16V1h15M6 12h3l2-4 2 7 2-3h2" /></Icon>对比
          </Tool>
          <Tool>
            <Icon w={20}><path d="M4 4h15v15H4zM1 16V1h15M8 9v5M11.500 7v9M15 9v5" /></Icon>组合
          </Tool>
          <Tool>
            <Icon w={20}><path d="M1 1h7v18H1zM12 1h7v7h-7zM12 11h7v8h-7z" /></Icon>分屏
          </Tool>
        </ToolGroup>
        <Periods>
          <Picker>
            <select aria-label="周期"><option>自定义周期</option></select>
            <Chevron />
          </Picker>
          {PERIODS.map((p) => <Period key={p} $active={p === "1日"}>{p}</Period>)}
        </Periods>
        <HeaderEnd>
          <span>0s</span>
          <Tool aria-label="截图"><Icon w={26} h={22}><path d="M2 4h5l2-3h8l2 3h5l1 1v14l-1 2H2l-1-2V5z" /><circle cx="13" cy="12" r="5" /></Icon></Tool>
          <Tool aria-label="退出全屏"><Icon w={22}><path d="M1 1l5 5M6 2v4H2M21 1l-5 5M16 2v4h4M1 21l5-5M6 20v-4H2M21 21l-5-5M16 20v-4h4" /></Icon></Tool>
          <Rule />
          <Picker $size={16}>
            <Icon w={28} h={22} sw={1.5}><path d="M7 19c-7 0-8-9-1-11C8-1 20-1 22 8c7 2 6 11 0 11h-3M7 19h3M14 21V10M10 14l4-4 4 4" /></Icon>
            <select aria-label="布局"><option>未命名</option></select>
            <Chevron />
          </Picker>
        </HeaderEnd>
      </Header>

      <Body>
        <Sidebar>
          {SIDE.map((g, i) => (
            <SideGroup key={i} $top={g.top} $last={i === SIDE.length - 1}>
              {g.items.map((t) => (
                <SideTool key={t.name} $tall={g.tall} aria-label={t.name}>
                  <SideIcon $active={t.active}>{t.icon}</SideIcon>
                  {t.more && <Caret><Icon w={5} h={8}><path d="M1 1l3 3-3 3" /></Icon></Caret>}
                </SideTool>
              ))}
            </SideGroup>
          ))}
        </Sidebar>

        <Main>
          <ChartRow>
            <PlotColumn>
              <Chart />
              <Legend $top={1} $left={5} $gap={16}>
                <span>时间:2021-09-28 08:00</span>
                {QUOTE.map(([k, v]) => <span key={k}>{k}:<Red>{v}</Red></span>)}
              </Legend>
              <Expander aria-label="展开"><Icon w={8} h={14} sw={1.5}><path d="M2 2l5 5-5 5" /></Icon></Expander>
              <Legend $top={688} $left={20} $gap={15}>
                <Picker>
                  <select aria-label="副图指标"><option>VOLUME</option></select>
                  <svg width="20" height="6" viewBox="0 0 20 6" fill={c.bright} aria-hidden="true"><path d="M6 0h10l-5 5z" /></svg>
                </Picker>
                <span>VOLUME:15,220.9143</span>
                <Tinted $color="#4c525c">预估成交量:42,162.3866</Tinted>
                <span>MA(5):44,517.1508</span>
                <Tinted $color={c.yellow}>MA(10):52,201.9234</Tinted>
              </Legend>
              <Tabs>
                {INDICATORS.map((t) => <Tab key={t} $tone={t === "VOLUME" ? c.blue : t === "FTBS" ? c.bright : undefined}>{t}</Tab>)}
              </Tabs>
            </PlotColumn>
            <Axis>
              <Scale $kind="price">
                {PRICE_LABELS.map((t, i) => <Mark key={i}>{t}</Mark>)}
                <Flag $top={321} $color={c.down}>41848.41</Flag>
              </Scale>
              <Scale $kind="volume">
                <Flag $top={214} $color="#c5851f">15.2k</Flag>
                {VOLUME_LABELS.map((t) => <Mark key={t}>{t}</Mark>)}
              </Scale>
            </Axis>
            <CollapseTab aria-label="收起">
              <svg width="45" height="16" viewBox="0 0 45 16" fill="#000" stroke="#444" aria-hidden="true">
                <path d="M1 0l4 13 3 2h29l3-2 4-13z" />
                <path d="M19 9l4-4 4 4" fill="none" stroke="#bbb" strokeWidth="1.5" />
              </svg>
            </CollapseTab>
            <Notes>
              <NotesTitle>趋势分析：下跌趋势</NotesTitle>
              <p>支撑：$40750，阻力：$44350</p>
              <p />
              <p>指标态度：</p>
              <p>RSI为34.32 下跌趋势。</p>
              <p>MACD增长速率-1564，下跌速率较大。</p>
              <p>MA/EMA（20,60）下跌趋势。</p>
              <p>BIAS -7，市场低估。</p>
              <p>目前日线波动区间ATR（N=2525），波动正常。</p>
              <p />
              <p>日线观点：</p>
              <p>看空：各指标都是下跌趋势。</p>
            </Notes>
          </ChartRow>
          <TimeAxis>{DATES.map((d) => <DateCell key={d}>{d}</DateCell>)}</TimeAxis>
          <Footer>
            <Locate>
              <Icon w={16} h={18}><path d="M8 17C3 12 1 10 1 7c0-8 14-8 14 0 0 3-2 5-7 10z" /><circle cx="8" cy="7" r="2" /></Icon>定位到...
            </Locate>
            <FooterGroup>
              <FooterButton $active>EMA</FooterButton>
              <FooterButton $active>MA</FooterButton>
            </FooterGroup>
            <FooterRule $h={16} />
            <FooterGroup>
              <FooterButton>MACD</FooterButton>
              <FooterButton $active>VOLUME</FooterButton>
              <FooterButton>RSI</FooterButton>
              <FooterButton>BIAS</FooterButton>
              <FooterButton>ATR</FooterButton>
              <FooterButton aria-label="编辑"><Icon w={16}><path d="M8 1H1v14h14V8M7 10l8-9" /></Icon></FooterButton>
            </FooterGroup>
            <FooterGroup $end>
              <FooterButton>对数</FooterButton>
              <FooterButton>%</FooterButton>
              <FooterButton $active>自动</FooterButton>
            </FooterGroup>
          </Footer>
        </Main>
      </Body>
    </Page>
  );
}
